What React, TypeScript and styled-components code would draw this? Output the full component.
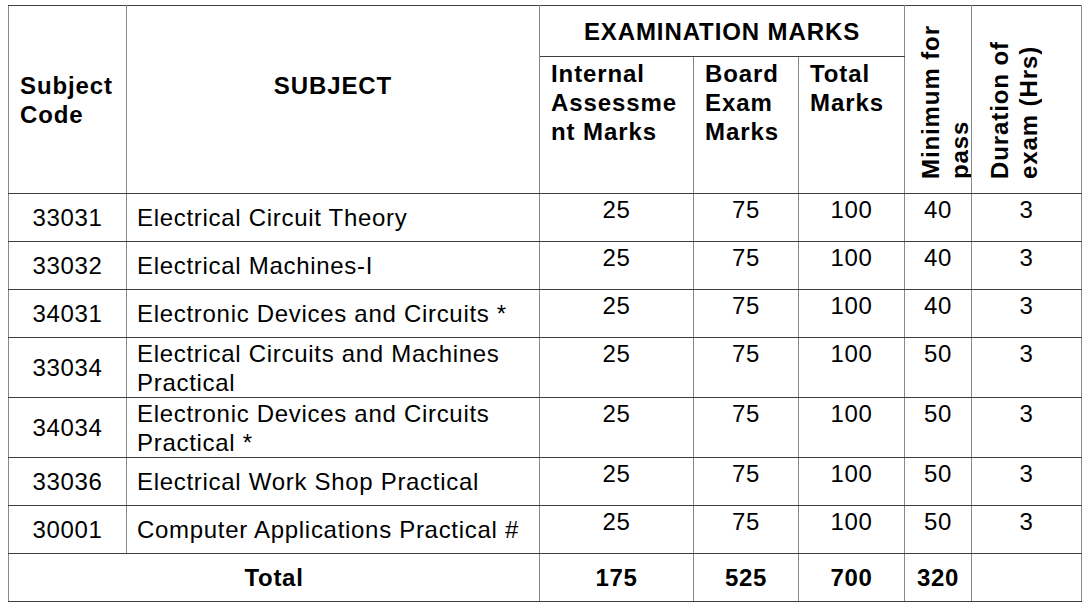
import styled, { createGlobalStyle } from 'styled-components';

const GlobalStyle = createGlobalStyle`
  body {
    margin: 0;
    background: #ffffff;
  }
`;

const Sheet = styled.div`
  padding: 5px 0 0 8px;
  font-family: 'Liberation Sans', Arial, sans-serif;
  color: #000;
`;

const MarksTable = styled.table`
  border-collapse: collapse;
  table-layout: fixed;
  width: 1074px;
  font-size: 24px;
  line-height: 29px;
  letter-spacing: 0.7px;
`;

const Row = styled.tr<{ $height: number }>`
  height: ${p => p.$height}px;
`;

const lines = `
  border-left: 1px solid #8a8a8a;
  border-right: 1px solid #8a8a8a;
  border-top: 1px solid #3f3f3f;
  border-bottom: 1px solid #3f3f3f;
`;

const HeadCell = styled.th<{ $align?: 'left' | 'center'; $valign?: 'top' | 'middle'; $padBottom?: number }>`
  ${lines}
  font-weight: bold;
  letter-spacing: 0.9px;
  text-align: ${p => p.$align || 'center'};
  vertical-align: ${p => p.$valign || 'middle'};
  padding: ${p => (p.$valign === 'top' ? '2px' : '0')} 4px ${p => p.$padBottom || 0}px
    ${p => (p.$align === 'left' ? '11px' : '4px')};
`;

const RotatedHead = styled.th`
  ${lines}
  font-weight: bold;
  letter-spacing: 0.9px;
  vertical-align: bottom;
  text-align: left;
  padding: 0 0 14px ${p => p.$padLeft}px;
  overflow: hidden;
` as any;

const Sideways = styled.div`
  writing-mode: vertical-rl;
  transform: rotate(180deg);
  height: 158px;
  width: 58px;
  text-align: start;
  white-space: normal;
`;

const CodeCell = styled.td`
  ${lines}
  text-align: center;
  vertical-align: middle;
  padding: 0;
`;

const NameCell = styled.td`
  ${lines}
  text-align: left;
  vertical-align: middle;
  padding: 0 4px 0 10px;
`;

const MarkCell = styled.td`
  ${lines}
  text-align: center;
  vertical-align: top;
  padding: 1px 0 0;
`;

const TotalCell = styled.td`
  ${lines}
  font-weight: bold;
  text-align: center;
  vertical-align: middle;
  padding: 0;
`;

interface Subject {
  code: string;
  name: string;
  min: number;
  tall?: boolean;
}

const subjects: Subject[] = [
  { code: '33031', name: 'Electrical Circuit Theory', min: 40 },
  { code: '33032', name: 'Electrical Machines-I', min: 40 },
  { code: '34031', name: 'Electronic Devices and Circuits *', min: 40 },
  { code: '33034', name: 'Electrical Circuits and Machines Practical', min: 50, tall: true },
  { code: '34034', name: 'Electronic Devices and Circuits Practical *', min: 50, tall: true },
  { code: '33036', name: 'Electrical Work Shop Practical', min: 50 },
  { code: '30001', name: 'Computer Applications Practical #', min: 50 },
];

export default function App() {
  return (
    <Sheet>
      <GlobalStyle />
      <MarksTable>
        <colgroup>
          <col style={{ width: 118 }} />
          <col style={{ width: 413 }} />
          <col style={{ width: 154 }} />
          <col style={{ width: 105 }} />
          <col style={{ width: 106 }} />
          <col style={{ width: 67 }} />
          <col style={{ width: 110 }} />
        </colgroup>
        <thead>
          <Row $height={51}>
            <HeadCell rowSpan={2} $align="left">
              Subject Code
            </HeadCell>
            <HeadCell rowSpan={2} $padBottom={29}>
              SUBJECT
            </HeadCell>
            <HeadCell colSpan={3}>EXAMINATION MARKS</HeadCell>
            <RotatedHead rowSpan={2} $padLeft={11}>
              <Sideways>Minimum for pass</Sideways>
            </RotatedHead>
            <RotatedHead rowSpan={2} $padLeft={13}>
              <Sideways>Duration of exam (Hrs)</Sideways>
            </RotatedHead>
          </Row>
          <Row $height={137}>
            <HeadCell $align="left" $valign="top">
              Internal Assessme nt Marks
            </HeadCell>
            <HeadCell $align="left" $valign="top">
              Board Exam Marks
            </HeadCell>
            <HeadCell $align="left" $valign="top">
              Total Marks
            </HeadCell>
          </Row>
        </thead>
        <tbody>
          {subjects.map(s => (
            <Row $height={s.tall ? 60 : 48} key={s.code}>
              <CodeCell>{s.code}</CodeCell>
              <NameCell>{s.name}</NameCell>
              <MarkCell>25</MarkCell>
              <MarkCell>75</MarkCell>
              <MarkCell>100</MarkCell>
              <MarkCell>{s.min}</MarkCell>
              <MarkCell>3</MarkCell>
            </Row>
          ))}
          <Row $height={48}>
            <TotalCell colSpan={2}>Total</TotalCell>
            <TotalCell>175</TotalCell>
            <TotalCell>525</TotalCell>
            <TotalCell>700</TotalCell>
            <TotalCell>320</TotalCell>
            <TotalCell />
          </Row>
        </tbody>
      </MarksTable>
    </Sheet>
  );
}
